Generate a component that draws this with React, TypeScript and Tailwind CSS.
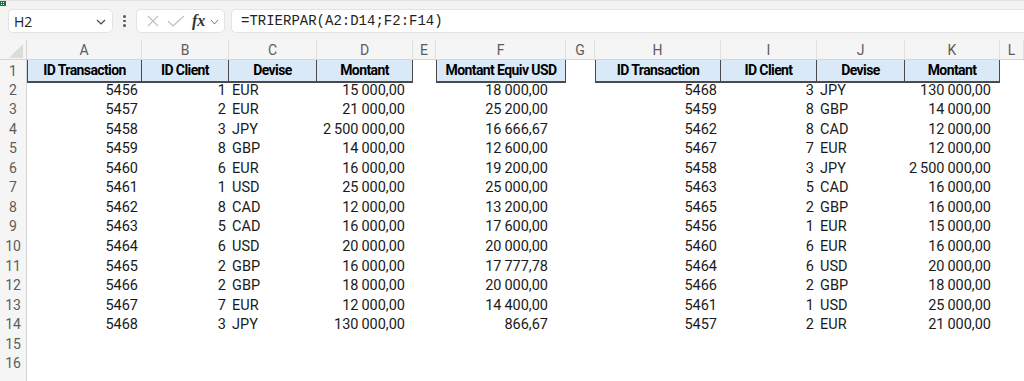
import React from "react";

const NS = "\u2009";

const left: [string, string, string, string, string][] = [
  ["5456", "1", "EUR", `15${NS}000,00`, `18${NS}000,00`],
  ["5457", "2", "EUR", `21${NS}000,00`, `25${NS}200,00`],
  ["5458", "3", "JPY", `2${NS}500${NS}000,00`, `16${NS}666,67`],
  ["5459", "8", "GBP", `14${NS}000,00`, `12${NS}600,00`],
  ["5460", "6", "EUR", `16${NS}000,00`, `19${NS}200,00`],
  ["5461", "1", "USD", `25${NS}000,00`, `25${NS}000,00`],
  ["5462", "8", "CAD", `12${NS}000,00`, `13${NS}200,00`],
  ["5463", "5", "CAD", `16${NS}000,00`, `17${NS}600,00`],
  ["5464", "6", "USD", `20${NS}000,00`, `20${NS}000,00`],
  ["5465", "2", "GBP", `16${NS}000,00`, `17${NS}777,78`],
  ["5466", "2", "GBP", `18${NS}000,00`, `20${NS}000,00`],
  ["5467", "7", "EUR", `12${NS}000,00`, `14${NS}400,00`],
  ["5468", "3", "JPY", `130${NS}000,00`, `866,67`],
];

const right: [string, string, string, string][] = [
  ["5468", "3", "JPY", `130${NS}000,00`],
  ["5459", "8", "GBP", `14${NS}000,00`],
  ["5462", "8", "CAD", `12${NS}000,00`],
  ["5467", "7", "EUR", `12${NS}000,00`],
  ["5458", "3", "JPY", `2${NS}500${NS}000,00`],
  ["5463", "5", "CAD", `16${NS}000,00`],
  ["5465", "2", "GBP", `16${NS}000,00`],
  ["5456", "1", "EUR", `15${NS}000,00`],
  ["5460", "6", "EUR", `16${NS}000,00`],
  ["5464", "6", "USD", `20${NS}000,00`],
  ["5466", "2", "GBP", `18${NS}000,00`],
  ["5461", "1", "USD", `25${NS}000,00`],
  ["5457", "2", "EUR", `21${NS}000,00`],
];

const COLS =
  "grid grid-cols-[27px_115px_87px_88px_96px_23px_130px_29px_126px_96px_88px_95px_1fr]";

const rowHeights = [
  "h-[19px]",
  "h-[20px]",
  "h-[19px]",
  "h-[20px]",
  "h-[19px]",
  "h-[20px]",
  "h-[19px]",
  "h-[20px]",
  "h-[20px]",
  "h-[19px]",
  "h-[20px]",
  "h-[19px]",
  "h-[20px]",
  "h-[19px]",
  "h-[20px]",
  "h-[20px]",
];

const letters = ["A", "B", "C", "D", "E", "F", "G", "H", "I", "J", "K", "L"];

function RowNum({ n }: { n: number | null }) {
  return (
    <div className="flex items-center justify-center bg-[#f5f5f5] border-r border-b border-r-[#d4d4d4] border-b-[#e3e3e3] text-[14px] text-[#5c5c5c]">
      {n}
    </div>
  );
}

function R({ children, pr = "pr-[4px]" }: { children?: React.ReactNode; pr?: string }) {
  return (
    <div className={`flex items-center justify-end whitespace-nowrap ${pr}`}>{children}</div>
  );
}
function L({ children }: { children?: React.ReactNode }) {
  return <div className="flex items-center whitespace-nowrap pl-[3px]">{children}</div>;
}

function H({ children, first }: { children: React.ReactNode; first?: boolean }) {
  return (
    <div
      className={`flex items-center justify-center whitespace-nowrap bg-[#dae9f8] border-r border-b-2 border-[#4a4a4a] font-bold text-[14px] tracking-[-0.6px] text-black ${
        first ? "border-l" : ""
      }`}
    >
      {children}
    </div>
  );
}

export default function App() {
  return (
    <div
      className="w-[1024px] h-[381px] overflow-hidden bg-white text-[#1a1a1a]"
      style={{ fontFamily: "Roboto, 'Noto Sans', sans-serif" }}
    >
      {/* toolbar */}
      <div className="relative h-[40px] bg-[#f3f3f3] border-t border-[#e2e2e2] flex items-start pt-[8px] pl-[8px]">
        <div className="absolute left-0 top-0 w-[6px] h-[5px]">
          <svg width="6" height="5" viewBox="0 0 6 5">
            <rect x="0" y="0" width="6" height="5" fill="#1e7145" />
            <rect x="1" y="1" width="1" height="1" fill="#fff" />
            <rect x="3" y="1" width="1" height="1" fill="#fff" />
            <rect x="1" y="3" width="1" height="1" fill="#fff" />
            <rect x="3" y="3" width="1" height="1" fill="#fff" />
          </svg>
        </div>
        {/* name box */}
        <div className="w-[105px] h-[24px] bg-white rounded-[5px] border border-[#e3e3e3] flex items-center justify-between pl-[5px] pr-[6px]">
          <span className="text-[14px] text-[#222]" style={{ fontFamily: "'Open Sans', sans-serif" }}>
            H2
          </span>
          <svg width="10" height="6" viewBox="0 0 10 6" className="mt-[2px]">
            <path d="M1 1 L5 5 L9 1" fill="none" stroke="#444" strokeWidth="1.2" />
          </svg>
        </div>
        {/* dots */}
        <div className="w-[23px] h-[24px] flex flex-col items-center justify-center gap-[2px]">
          <div className="w-[2.5px] h-[2.5px] bg-[#555] rounded-full" />
          <div className="w-[2.5px] h-[2.5px] bg-[#555] rounded-full" />
          <div className="w-[2.5px] h-[2.5px] bg-[#555] rounded-full" />
        </div>
        {/* function box */}
        <div className="w-[89px] h-[24px] bg-white rounded-[5px] border border-[#e3e3e3] flex items-center pl-[10px]">
          <svg width="12" height="12" viewBox="0 0 12 12">
            <path d="M1 1 L11 11 M11 1 L1 11" stroke="#bdbdbd" strokeWidth="1.1" fill="none" />
          </svg>
          <svg width="18" height="12" viewBox="0 0 18 12" className="ml-[8px]">
            <path d="M1 6 L6 11 L17 1" stroke="#bdbdbd" strokeWidth="1.1" fill="none" />
          </svg>
          <span
            className="ml-[7px] text-[16px] italic font-bold text-[#333] leading-none"
            style={{ fontFamily: "'Liberation Serif', serif" }}
          >
            fx
          </span>
          <svg width="9" height="6" viewBox="0 0 9 6" className="ml-[5px] mt-[2px]">
            <path d="M1 1 L4.5 5 L8 1" fill="none" stroke="#777" strokeWidth="1" />
          </svg>
        </div>
        {/* formula bar */}
        <div className="ml-[6px] flex-1 h-[24px] bg-white rounded-l-[5px] border border-r-0 border-[#e3e3e3] flex items-center pl-[9px]">
          <span className="text-[14px] text-[#222]" style={{ fontFamily: "'Liberation Mono', monospace" }}>
            =TRIERPAR(A2:D14;F2:F14)
          </span>
        </div>
      </div>

      {/* column headers */}
      <div className={`${COLS} h-[20px] bg-[#f5f5f5] border-b border-[#d4d4d4]`}>
        <div className="relative border-r border-[#d4d4d4]">
          <svg width="16" height="16" viewBox="0 0 16 16" className="absolute right-[2px] bottom-[2px]">
            <path d="M15 1 L15 15 L1 15 Z" fill="#dcdcdc" />
          </svg>
        </div>
        {letters.map((l) => (
          <div
            key={l}
            className="flex items-center justify-center border-r border-[#e0e0e0] text-[14px] text-[#5c5c5c]"
          >
            {l}
          </div>
        ))}
      </div>

      {/* row 1 headers */}
      <div className={`${COLS} h-[20px] text-[14.5px]`}>
        <RowNum n={1} />
        <H first>ID Transaction</H>
        <H>ID Client</H>
        <H>Devise</H>
        <H>Montant</H>
        <div />
        <H first>Montant Equiv USD</H>
        <div />
        <H first>ID Transaction</H>
        <H>ID Client</H>
        <H>Devise</H>
        <H>Montant</H>
        <div />
      </div>

      {rowHeights.map((h, i) => {
        const n = i + 2;
        const a = left[i];
        const b = right[i];
        return (
          <div key={n} className={`${COLS} ${h} text-[14.5px] text-[#1a1a1a]`}>
            <RowNum n={n <= 16 ? n : null} />
            <R>{a?.[0]}</R>
            <R pr="pr-[3px]">{a?.[1]}</R>
            <L>{a?.[2]}</L>
            <R pr="pr-[8px]">{a?.[3]}</R>
            <div />
            <R pr="pr-[18px]">{a?.[4]}</R>
            <div />
            <R>{b?.[0]}</R>
            <R pr="pr-[3px]">{b?.[1]}</R>
            <L>{b?.[2]}</L>
            <R pr="pr-[9px]">{b?.[3]}</R>
            <div />
          </div>
        );
      })}
    </div>
  );
}
